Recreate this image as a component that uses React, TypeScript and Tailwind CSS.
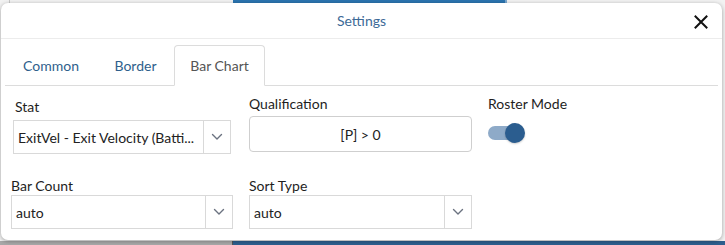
import React from "react";

function Chevron() {
  return (
    <svg width="12" height="8" viewBox="0 0 12 8" fill="none">
      <path d="M1.5 1.5 L6 6 L10.5 1.5" stroke="#6b7280" strokeWidth="1.4" strokeLinecap="round" strokeLinejoin="round" />
    </svg>
  );
}

function Select({ value, className, divX }: { value: string; className?: string; divX?: string }) {
  return (
    <div className={`flex h-[34px] border border-[#d9d9d9] bg-white ${className ?? ""}`}>
      <div className="flex-1 min-w-0 flex items-center pl-[4px] pr-1 text-[14px] text-[#222] whitespace-nowrap">
        <span>{value}</span>
      </div>
      <div className={`flex items-center justify-center border-l border-[#d9d9d9] ${divX ?? "w-[26px]"}`}>
        <Chevron />
      </div>
    </div>
  );
}

function Tab({ label, width, active }: { label: string; width: string; active?: boolean }) {
  if (active) {
    return (
      <div className={`${width} h-[41px] mb-[-1px] flex items-center justify-center text-[14px] text-[#555] bg-white border border-[#dcdcdc] border-b-white rounded-t-[4px]`}>
        {label}
      </div>
    );
  }
  return (
    <div className={`${width} h-[40px] flex items-center justify-center text-[14px] text-[#2f5f8c]`}>
      {label}
    </div>
  );
}

export default function App() {
  return (
    <div className="relative w-[725px] h-[245px] overflow-hidden bg-[#f2f2f2]" style={{ fontFamily: "Lato, 'Open Sans', sans-serif" }}>
      <div className="flex h-[3px]">
        <div className="w-[9px] bg-[#f2f2f2]" />
        <div className="w-[1px] bg-[#c8c8c8]" />
        <div className="w-[223px] bg-[#f2f2f2]" />
        <div className="w-[272px] bg-[#2b74b0]" />
        <div className="w-[2px] bg-[#7aa8d0]" />
        <div className="flex-1 bg-[#f2f2f2]" />
      </div>
      <div className="absolute left-0 right-0 bottom-0 flex h-[4px]">
        <div className="w-[232px] bg-[#a8a8a8]" />
        <div className="w-[1px] bg-[#555]" />
        <div className="flex-1 bg-[#2d5f8e]" />
      </div>

      <div className="absolute left-[1px] top-[3px] w-[721px] h-[237px] bg-white rounded-[7px] shadow-[0_1px_4px_rgba(0,0,0,0.35)] flex flex-col">
        <div className="relative h-[36px] flex items-center justify-center border-b border-[#ececec]">
          <span className="text-[14px] text-[#3d6a97]">Settings</span>
          <svg className="absolute right-[14px] top-[12px]" width="14" height="14" viewBox="0 0 14 14">
            <path d="M1.5 1.5 L12.5 12.5 M12.5 1.5 L1.5 12.5" stroke="#111" strokeWidth="2" strokeLinecap="square" />
          </svg>
        </div>

        <div className="mx-[4px] mt-[6px] flex items-end border-b border-[#dcdcdc] h-[41px]">
          <Tab label="Common" width="w-[92px]" />
          <Tab label="Border" width="w-[77px]" />
          <Tab label="Bar Chart" width="w-[91px]" active />
        </div>

        <div className="flex pt-[10px]">
          <div className="flex flex-col w-[236px] pl-[10px]">
            <div className="pl-[4px] text-[14px] text-[#1e1e1e] leading-[16px] mt-[3px]">Stat</div>
            <Select value="ExitVel - Exit Velocity (Batti..." className="mt-[5px] ml-[2px] w-[218px]" divX="w-[27px]" />
            <div className="text-[14px] text-[#1e1e1e] leading-[16px] mt-[24px]">Bar Count</div>
            <Select value="auto" className="mt-[1px] w-[222px]" divX="w-[27px]" />
          </div>
          <div className="flex flex-col w-[239px] pl-[12px]">
            <div className="text-[14px] text-[#1e1e1e] leading-[16px]">Qualification</div>
            <div className="mt-[4px] h-[36px] w-[223px] border border-[#cfcfcf] rounded-[4px] flex items-center justify-center text-[14px] text-[#222]">
              [P] &gt; 0
            </div>
            <div className="text-[14px] text-[#1e1e1e] leading-[16px] mt-[26px]">Sort Type</div>
            <Select value="auto" className="mt-[1px] w-[223px]" divX="w-[27px]" />
          </div>
          <div className="flex flex-col pl-[12px]">
            <div className="text-[14px] text-[#1e1e1e] leading-[16px]">Roster Mode</div>
            <div className="relative mt-[11px] w-[37px] h-[20px]">
              <div className="absolute left-0 top-[3px] w-[32px] h-[14px] rounded-full bg-[#8eaac8]" />
              <div className="absolute left-[17px] top-0 w-[20px] h-[20px] rounded-full bg-[#2b5d8f] shadow-[0_1px_2px_rgba(0,0,0,0.2)]" />
            </div>
          </div>
        </div>
      </div>
    </div>
  );
}
